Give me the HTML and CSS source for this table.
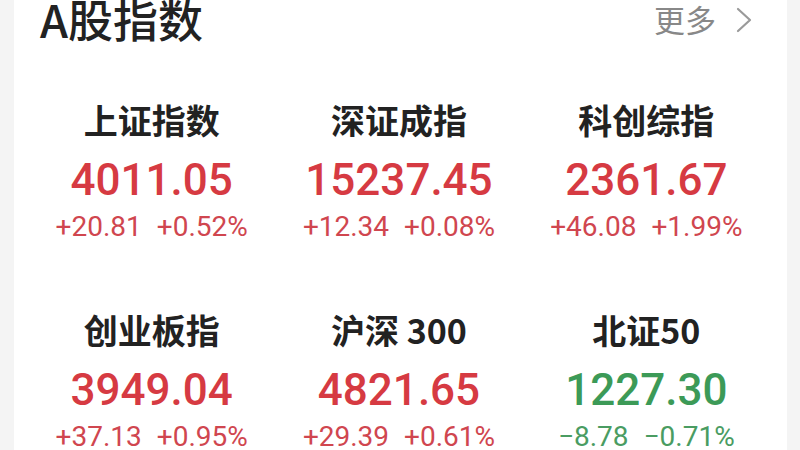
FILE: index.html
```html
<!DOCTYPE html>
<html lang="zh-CN">
<head>
<meta charset="utf-8">
<link rel="stylesheet" href="styles.css">
</head>
<body>
<div class="card">
  <div class="head">
    <div class="title">A股指数</div>
    <div class="more">
      <span>更多</span>
      <svg class="chev" width="16" height="26" viewBox="0 0 16 26"><polyline points="2,2 14,13 2,24" fill="none" stroke="#9a9a9a" stroke-width="2.2" stroke-linecap="round" stroke-linejoin="round"/></svg>
    </div>
  </div>
  <div class="grid">
    <div class="cell up">
      <div class="name">上证指数</div>
      <div class="price">4011.05</div>
      <div class="change"><span>+20.81</span><span>+0.52%</span></div>
    </div>
    <div class="cell up">
      <div class="name">深证成指</div>
      <div class="price">15237.45</div>
      <div class="change"><span>+12.34</span><span>+0.08%</span></div>
    </div>
    <div class="cell up">
      <div class="name">科创综指</div>
      <div class="price">2361.67</div>
      <div class="change"><span>+46.08</span><span>+1.99%</span></div>
    </div>
    <div class="cell up">
      <div class="name">创业板指</div>
      <div class="price">3949.04</div>
      <div class="change"><span>+37.13</span><span>+0.95%</span></div>
    </div>
    <div class="cell up">
      <div class="name">沪深 300</div>
      <div class="price">4821.65</div>
      <div class="change"><span>+29.39</span><span>+0.61%</span></div>
    </div>
    <div class="cell down">
      <div class="name">北证50</div>
      <div class="price">1227.30</div>
      <div class="change"><span>−8.78</span><span>−0.71%</span></div>
    </div>
  </div>
</div>
</body>
</html>
```
FILE: styles.css
```css
html, body {
  margin: 0;
  padding: 0;
}
body {
  background: #f4f4f4;
  height: 450px;
  overflow: hidden;
  font-family: "Noto Sans CJK SC", "Noto Sans", sans-serif;
}
.card {
  margin-left: 14px;
  width: 773px;
  height: 450px;
  box-sizing: border-box;
  background: #fff;
  padding: 0 17px 0 14px;
}
.head {
  display: flex;
  justify-content: space-between;
  align-items: center;
  height: 38px;
  padding: 0 18px 0 12px;
}
.title {
  font-size: 45px;
  line-height: 38px;
  font-weight: 500;
  color: #222;
}
.more {
  display: flex;
  align-items: center;
  gap: 20px;
  font-size: 31px;
  line-height: 38px;
  color: #888;
}
.chev {
  display: block;
  margin-top: 2px;
}
.grid {
  display: grid;
  grid-template-columns: repeat(3, 1fr);
  row-gap: 68px;
  margin-top: 62px;
}
.cell {
  display: flex;
  flex-direction: column;
  align-items: center;
}
.name {
  font-size: 34px;
  line-height: 40px;
  font-weight: 600;
  color: #222;
  white-space: nowrap;
}
.price {
  margin-top: 15px;
  font-family: Roboto, "Liberation Sans", sans-serif;
  font-size: 44px;
  line-height: 50px;
  font-weight: 500;
}
.change {
  margin-top: 7px;
  display: flex;
  gap: 15px;
  font-family: Roboto, "Liberation Sans", sans-serif;
  font-size: 28px;
  line-height: 30px;
  font-weight: 400;
}
.up .price { color: #d63a42; }
.up .change { color: #d0464f; }
.down .price { color: #3c9a57; }
.down .change { color: #4a9c62; }
```
